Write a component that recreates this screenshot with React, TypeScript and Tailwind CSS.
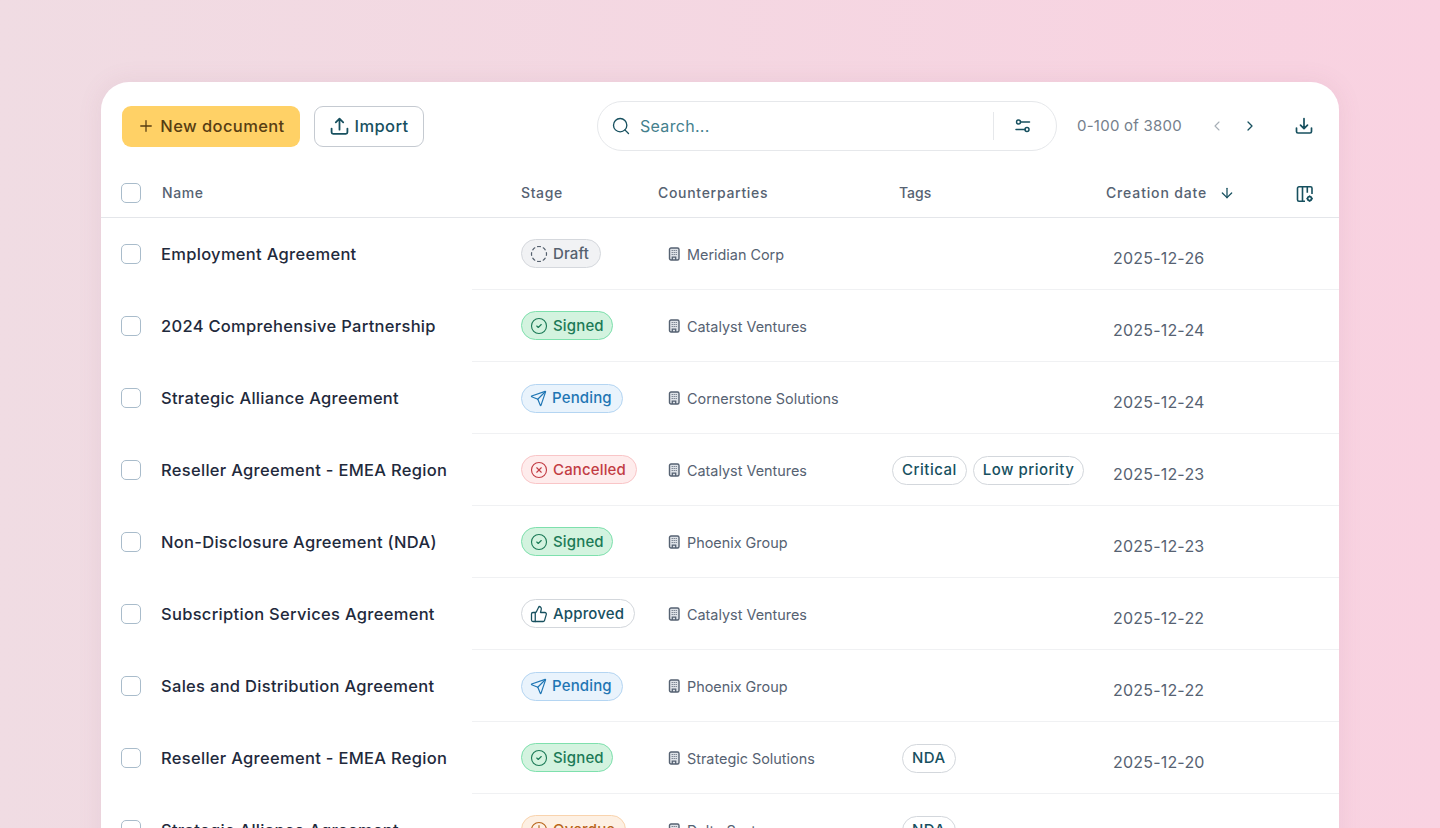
import { ArrowDown, ChevronLeft, ChevronRight, CircleCheck, CircleDashed, CircleX, Clock, Plus, Search, Send, ThumbsUp } from "lucide-react";
import type { ReactNode } from "react";

function BuildingIcon() {
  return (
    <svg width="12" height="14" viewBox="0 0 12 14" fill="none" className="shrink-0">
      <rect x="1.500" y="1" width="9.500" height="12" rx="1.500" fill="#dfe3e8" stroke="#566272" strokeWidth="1.400" />
      <path d="M3.700 3.500h1M5.700 3.500h1M7.700 3.500h1M3.700 5.500h1M5.700 5.500h1M7.700 5.500h1M3.700 7.500h1M5.700 7.500h1M7.700 7.500h1" stroke="#566272" strokeWidth="1" />
      <path d="M4.300 13v-2.800h3.400V13" stroke="#566272" strokeWidth="1.300" />
    </svg>
  );
}

function UploadIcon() {
  return (
    <svg width="19" height="19" viewBox="0 0 18 18" fill="none" stroke="#17505f" strokeWidth="1.700" strokeLinecap="round" strokeLinejoin="round">
      <path d="M9 12V1.800M5.500 5 9 1.500 12.500 5" />
      <path d="M1.500 11v3.500A1.500 1.500 0 0 0 3 16h12a1.500 1.500 0 0 0 1.500-1.500V11" />
    </svg>
  );
}

function DownloadIcon() {
  return (
    <svg width="18" height="18" viewBox="0 0 18 18" fill="none" stroke="#17505f" strokeWidth="1.700" strokeLinecap="round" strokeLinejoin="round">
      <path d="M9 1.500v10M5.500 8.200 9 11.700l3.500-3.500" />
      <path d="M1.500 11v3.500A1.500 1.500 0 0 0 3 16h12a1.500 1.500 0 0 0 1.500-1.500V11" />
    </svg>
  );
}

function FilterIcon() {
  return (
    <svg width="16" height="16" viewBox="0 0 16 16" fill="none" stroke="#17505f" strokeWidth="1.500" strokeLinecap="round">
      <circle cx="3.500" cy="4" r="2" />
      <path d="M5.500 4h9" />
      <circle cx="12" cy="11.500" r="2" />
      <path d="M1 11.500h9" />
    </svg>
  );
}

function ColumnsIcon() {
  return (
    <svg width="18" height="18" viewBox="0 0 18 18" fill="none" stroke="#17505f" strokeWidth="1.600" strokeLinejoin="round">
      <path d="M9 16.200H3a1.500 1.500 0 0 1-1.500-1.500V3.300A1.500 1.500 0 0 1 3 1.800h11.500A1.500 1.500 0 0 1 16 3.300V9" />
      <path d="M6.500 1.800v14.400M11.300 1.800v6" />
      <circle cx="13.600" cy="13.600" r="2" strokeWidth="1.700" />
      <path d="M13.600 10.400v1.200M13.600 15.600v1.200M10.400 13.600h1.200M15.600 13.600h1.200" strokeWidth="1.300" />
    </svg>
  );
}

const stageStyles: Record<string, { box: string; icon: ReactNode }> = {
  Draft: { box: "w-[80px] bg-[#f1f2f4] border-[#d5d8dd] text-[#55606e]", icon: <CircleDashed size={18} strokeWidth={1.6} /> },
  Signed: { box: "w-[92px] bg-[#d3f3df] border-[#7ee0ad] text-[#1c7a57]", icon: <CircleCheck size={18} strokeWidth={1.5} /> },
  Pending: { box: "w-[102px] bg-[#e9f3fc] border-[#b4d5f2] text-[#1f76b4]", icon: <Send size={17} strokeWidth={1.7} /> },
  Cancelled: { box: "w-[116px] bg-[#feecec] border-[#f9c5c7] text-[#c23c44]", icon: <CircleX size={18} strokeWidth={1.5} /> },
  Approved: { box: "w-[114px] bg-white border-[#d3d7dc] text-[#17505f]", icon: <ThumbsUp size={18} strokeWidth={1.7} /> },
  Overdue: { box: "w-[105px] bg-[#fdf0e3] border-[#f9d3ad] text-[#b8651b]", icon: <Clock size={18} strokeWidth={1.5} /> },
};

function StageBadge({ stage }: { stage: string }) {
  const s = stageStyles[stage];
  return (
    <span className={`inline-flex h-[29px] items-center gap-[5px] whitespace-nowrap rounded-full border-[1.5px] pl-[8px] text-[15px] font-medium tracking-[0.15px] ${s.box}`}>
      {s.icon}
      {stage}
    </span>
  );
}

function Tag({ label }: { label: string }) {
  return (
    <span className="inline-flex h-[29px] items-center rounded-full border-[1.5px] border-[#d3d7dc] bg-white px-[9px] text-[15px] font-medium tracking-[0.5px] text-[#17505f]">
      {label}
    </span>
  );
}

function Checkbox() {
  return <span className="block h-5 w-5 rounded-[5px] border-[1.5px] border-[#a9bccb] bg-white" />;
}

const rows = [
  { name: "Employment Agreement", stage: "Draft", party: "Meridian Corp", date: "2025-12-26", tags: [] as string[], tagPad: "" },
  { name: "2024 Comprehensive Partnership", stage: "Signed", party: "Catalyst Ventures", date: "2025-12-24", tags: [], tagPad: "" },
  { name: "Strategic Alliance Agreement", stage: "Pending", party: "Cornerstone Solutions", date: "2025-12-24", tags: [], tagPad: "" },
  { name: "Reseller Agreement - EMEA Region", stage: "Cancelled", party: "Catalyst Ventures", date: "2025-12-23", tags: ["Critical", "Low priority"], tagPad: "pl-0" },
  { name: "Non-Disclosure Agreement (NDA)", stage: "Signed", party: "Phoenix Group", date: "2025-12-23", tags: [], tagPad: "" },
  { name: "Subscription Services Agreement", stage: "Approved", party: "Catalyst Ventures", date: "2025-12-22", tags: [], tagPad: "" },
  { name: "Sales and Distribution Agreement", stage: "Pending", party: "Phoenix Group", date: "2025-12-22", tags: [], tagPad: "" },
  { name: "Reseller Agreement - EMEA Region", stage: "Signed", party: "Strategic Solutions", date: "2025-12-20", tags: ["NDA"], tagPad: "pl-[10px]" },
  { name: "Strategic Alliance Agreement", stage: "Overdue", party: "Delta Systems", date: "2025-12-19", tags: ["NDA"], tagPad: "pl-[10px]" },
];

export default function App() {
  return (
    <div className="h-[828px] overflow-hidden bg-gradient-to-r from-[#f0dce3] to-[#f9d2e1] px-[101px] pt-[82px] font-['Inter',sans-serif]">
      <div className="rounded-t-[28px] bg-white shadow-[0_0_24px_rgba(150,90,120,0.1)]">
        {/* toolbar */}
        <div className="flex h-[88px] items-center pl-[21px] pr-[26px]">
          <button className="flex h-[41px] w-[178px] items-center justify-center gap-[5px] rounded-[9px] bg-[#ffd166] text-[16.5px] font-[450] tracking-[0.4px] text-[#573d12]">
            <Plus size={18} strokeWidth={1.7} />
            New document
          </button>
          <button className="ml-[14px] flex h-[41px] w-[110px] items-center justify-center gap-[6px] rounded-[9px] border-[1.5px] border-[#c5cad1] bg-white text-[16.5px] font-[450] tracking-[0.4px] text-[#17505f]">
            <UploadIcon />
            Import
          </button>
          <div className="ml-[173px] flex h-[50px] w-[460px] items-center rounded-full border-[1.5px] border-[#e6e8eb] pl-[13px] pr-[25px]">
            <Search size={20} strokeWidth={1.6} className="text-[#17505f]" />
            <span className="ml-[9px] flex-1 text-[16px] tracking-[0.3px] text-[#44808d]">Search...</span>
            <span className="h-7 w-px bg-[#e6e8eb]" />
            <span className="ml-[21px]"><FilterIcon /></span>
          </div>
          <span className="ml-[20px] text-[15px] tracking-[0.24px] text-[#75808c]">0-100 of 3800</span>
          <ChevronLeft size={16} strokeWidth={1.6} className="ml-[27px] text-[#a6aeb6]" />
          <ChevronRight size={16} strokeWidth={1.9} className="ml-[17px] text-[#17505f]" />
          <span className="ml-[37px]"><DownloadIcon /></span>
        </div>

        {/* header */}
        <div className="flex h-[48px] items-center border-b border-[#e4e6ea] pb-[2px] text-[14px] font-medium tracking-[0.6px] text-[#566272]">
          <div className="flex w-[420px] items-center pl-5">
            <Checkbox />
            <span className="ml-[21px]">Name</span>
          </div>
          <span className="w-[137px]">Stage</span>
          <span className="w-[241px] tracking-[0.7px]">Counterparties</span>
          <span className="w-[207px] tracking-normal">Tags</span>
          <span className="flex w-[190px] items-center tracking-[0.85px]">
            Creation date
            <ArrowDown size={16} strokeWidth={1.9} className="ml-[12px] text-[#17505f]" />
          </span>
          <span className="mt-[2px]"><ColumnsIcon /></span>
        </div>

        {/* rows */}
        {rows.map((row, i) => (
          <div key={i} className="flex h-[72px]">
            <div className="flex w-[371px] shrink-0 items-center pl-5">
              <Checkbox />
              <span className="ml-5 whitespace-nowrap text-[16.5px] font-[450] tracking-[0.3px] text-[#1f2a3c]">{row.name}</span>
            </div>
            <div className="flex flex-1 items-center border-b border-[#f0f1f3]">
              <div className="w-[196px] pl-[49px] pt-[1px]"><StageBadge stage={row.stage} /></div>
              <div className="flex w-[224px] items-center gap-[7px] pt-[2px] text-[14.4px] text-[#566272]">
                <BuildingIcon />
                {row.party}
              </div>
              <div className={`flex w-[221px] gap-[6px] pt-[1px] ${row.tagPad}`}>
                {row.tags.map((t) => <Tag key={t} label={t} />)}
              </div>
              <span className="pt-2 text-[16px] tracking-[0.2px] text-[#566272]">{row.date}</span>
            </div>
          </div>
        ))}
      </div>
    </div>
  );
}
